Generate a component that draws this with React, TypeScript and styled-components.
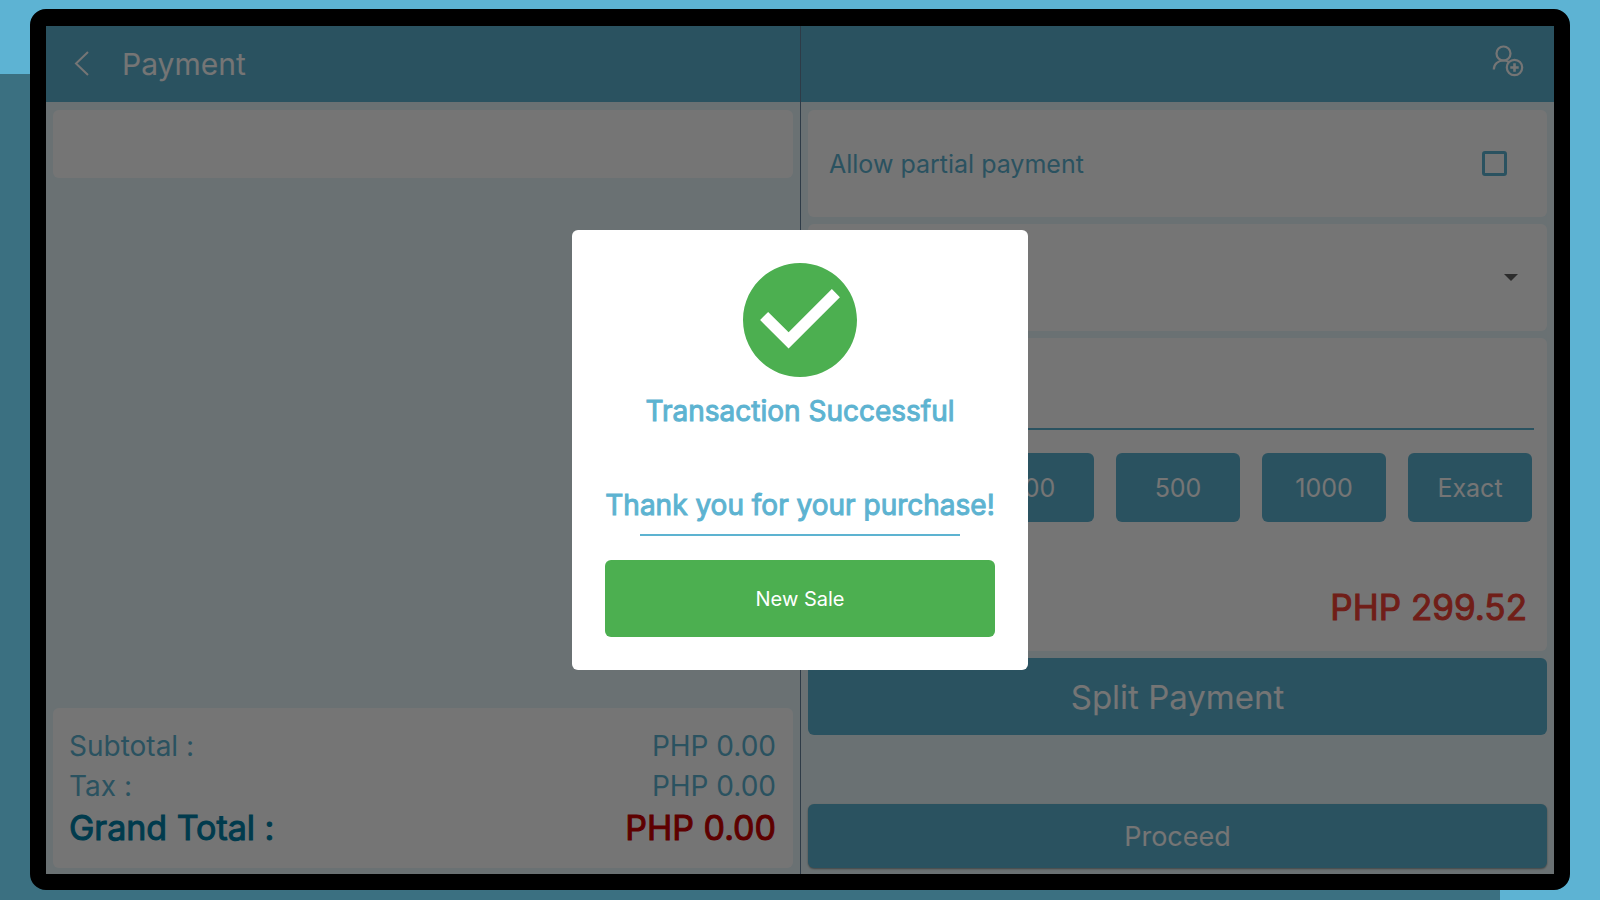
import React, { useState } from "react";
import styled, { createGlobalStyle } from "styled-components";

const color = {
  sky: "#5db3d3",
  slate: "#3b7081",
  brand: "#5db3d1",
  deep: "#0080a8",
  canvas: "#e8f7fa",
  paper: "#ffffff",
  divider: "#64829b",
  green: "#4caf50",
  red: "#f44336",
  crimson: "#cc0000",
};

const GlobalStyle = createGlobalStyle`
  *, *::before, *::after { box-sizing: border-box; }
  button, input, select { font: inherit; color: inherit; }
  body {
    margin: 0;
    font-family: Inter, "Liberation Sans", sans-serif;
    font-optical-sizing: none;
  }
`;

const Page = styled.div`
  min-height: 100vh;
  display: flex;
  padding: 9px 30px 10px;
  background: linear-gradient(${color.slate}, ${color.slate}) left bottom /
    calc(100% - 100px) calc(100% - 74px) no-repeat ${color.sky};
`;

const Tablet = styled.div`
  flex: 1;
  display: flex;
  border: 16px solid #000;
  border-top-width: 17px;
  border-radius: 16px;
  background: #000;
`;

const Screen = styled.div`
  position: relative;
  flex: 1;
  display: grid;
  grid-template-columns: 1fr 1fr;
  background: ${color.canvas};
`;

const Pane = styled.section<{ $divided?: boolean }>`
  display: flex;
  flex-direction: column;
  min-width: 0;
  ${(p) => p.$divided && `border-left: 1px solid ${color.divider};`}
`;

const Header = styled.header<{ $end?: boolean }>`
  height: 76px;
  display: flex;
  align-items: center;
  justify-content: ${(p) => (p.$end ? "flex-end" : "flex-start")};
  gap: 16px;
  padding: ${(p) => (p.$end ? "0 30px 6px" : "0 28px")};
  background: ${color.brand};
  color: ${color.paper};
`;

const Title = styled.h1`
  margin: 0;
  font-size: 30px;
  line-height: 36px;
  font-weight: 400;
`;

const IconButton = styled.button`
  display: flex;
  padding: 0;
  border: 0;
  background: none;
  cursor: pointer;
`;

const Stack = styled.div`
  flex: 1;
  display: flex;
  flex-direction: column;
  gap: 7px;
  padding: 8px 7px 6px;
`;

const Spacer = styled.div`
  flex: 1;
`;

const Card = styled.div`
  border-radius: 6px;
  background: ${color.paper};
`;

const SearchCard = styled(Card)`
  height: 68px;
`;

const Totals = styled(Card)`
  padding: 18px 17px 16px 16px;
`;

const TotalRow = styled.div<{ $grand?: boolean }>`
  display: flex;
  justify-content: space-between;
  color: ${(p) => (p.$grand ? color.deep : color.brand)};
  font-size: ${(p) => (p.$grand ? 34 : 28)}px;
  line-height: ${(p) => (p.$grand ? 44 : 40)}px;
  padding-bottom: ${(p) => (p.$grand ? 2 : 0)}px;
  ${(p) => p.$grand && "-webkit-text-stroke: 1px currentColor;"}
`;

const Amount = styled.span<{ $due?: boolean }>`
  ${(p) => p.$due && `color: ${color.crimson};`}
`;

const PartialCard = styled(Card)`
  height: 107px;
  display: flex;
  align-items: center;
  justify-content: space-between;
  padding: 0 40px 0 21px;
  color: ${color.brand};
  font-size: 25px;
  line-height: 32px;
`;

const Checkbox = styled.input`
  appearance: none;
  width: 25px;
  height: 25px;
  margin: 0;
  border: 3px solid ${color.brand};
  border-radius: 3px;
  &:checked {
    background: ${color.brand};
  }
`;

const MethodCard = styled(Card)`
  height: 107px;
  display: flex;
  align-items: center;
  padding: 0 29px 0 21px;
`;

const MethodSelect = styled.select`
  appearance: none;
  flex: 1;
  height: 48px;
  border: 0;
  background: none;
  color: ${color.brand};
  font-size: 25px;
`;

const PayCard = styled(Card)`
  height: 313px;
  display: flex;
  flex-direction: column;
  padding: 16px 13px 16px 14px;
`;

const TenderInput = styled.input`
  width: 100%;
  height: 76px;
  border: 0;
  border-bottom: 2px solid ${color.brand};
  background: none;
  color: ${color.brand};
  font-size: 34px;
  outline: none;
`;

const QuickRow = styled.div`
  display: grid;
  grid-template-columns: repeat(5, 1fr);
  gap: 22px;
  padding: 23px 2px 0;
`;

const FilledButton = styled.button<{ $height: number; $size: number; $raised?: boolean }>`
  width: 100%;
  height: ${(p) => p.$height}px;
  padding: 0;
  border: 0;
  border-radius: 6px;
  background: ${color.brand};
  color: ${color.paper};
  font-size: ${(p) => p.$size}px;
  cursor: pointer;
  ${(p) => p.$raised && "box-shadow: 0 1px 2px rgba(0, 0, 0, 0.4);"}
`;

const Balance = styled.output`
  display: block;
  padding: 62px 7px 0;
  color: ${color.red};
  font-size: 35px;
  line-height: 46px;
  -webkit-text-stroke: 1px currentColor;
  text-align: right;
`;

const Scrim = styled.div`
  position: absolute;
  inset: 0;
  display: flex;
  align-items: center;
  justify-content: center;
  background: rgba(0, 0, 0, 0.54);
`;

const Dialog = styled.div`
  width: 456px;
  display: flex;
  flex-direction: column;
  align-items: center;
  padding: 33px;
  border-radius: 6px;
  background: ${color.paper};
  color: ${color.brand};
`;

const Message = styled.p`
  margin: 0;
  font-size: 28px;
  line-height: 34px;
  font-weight: 400;
  -webkit-text-stroke: 1px currentColor;
  white-space: nowrap;
`;

const Heading = styled(Message).attrs({ as: "h2" })`
  margin: 17px 0 60px;
`;

const Rule = styled.hr`
  width: 320px;
  margin: 12px 0 24px;
  border: 0;
  border-top: 2px solid ${color.brand};
`;

const NewSaleButton = styled(FilledButton)`
  background: ${color.green};
`;

const BackIcon = () => (
  <svg width="32" height="32" viewBox="0 0 32 32" fill="none" stroke="currentColor" strokeWidth="2" aria-hidden="true">
    <path d="M14 4L2 15.500L14 27" />
  </svg>
);

const AddPersonIcon = () => (
  <svg width="32" height="32" viewBox="0 0 32 32" fill="none" stroke="currentColor" strokeWidth="2.200" aria-hidden="true">
    <circle cx="11.500" cy="8.500" r="7" />
    <path d="M1.800 24.500C1.800 19.200 6 15.500 11.500 15.500C13.500 15.500 15.300 16 16.800 17" />
    <circle cx="22.500" cy="22.500" r="7.700" />
    <path d="M22.500 18.300V26.700M18.300 22.500H26.700" strokeWidth="2.600" />
  </svg>
);

const CaretIcon = () => (
  <svg width="14" height="7" viewBox="0 0 14 7" fill="#616161" aria-hidden="true">
    <path d="M0 0H14L7 7Z" />
  </svg>
);

const SuccessIcon = () => (
  <svg width="114" height="114" viewBox="2 2 20 20" fill={color.green} aria-hidden="true">
    <path d="M12 2C6.480 2 2 6.480 2 12s4.480 10 10 10 10-4.480 10-10S17.520 2 12 2zm-2 15l-5-5 1.410-1.410L10 14.170l7.590-7.590L19 8l-9 9z" />
  </svg>
);

const totals = [
  { label: "Subtotal :", value: "PHP 0.00" },
  { label: "Tax :", value: "PHP 0.00" },
  { label: "Grand Total :", value: "PHP 0.00", grand: true },
];

const quickAmounts = ["", "200", "500", "1000", "Exact"];

export default function App() {
  const [partial, setPartial] = useState(false);
  const [tender, setTender] = useState("");

  return (
    <>
      <GlobalStyle />
      <Page>
        <Tablet>
          <Screen>
            <Pane>
              <Header>
                <IconButton aria-label="Back">
                  <BackIcon />
                </IconButton>
                <Title>Payment</Title>
              </Header>
              <Stack>
                <SearchCard />
                <Spacer />
                <Totals>
                  {totals.map((t) => (
                    <TotalRow key={t.label} $grand={t.grand}>
                      <span>{t.label}</span>
                      <Amount $due={t.grand}>{t.value}</Amount>
                    </TotalRow>
                  ))}
                </Totals>
              </Stack>
            </Pane>
            <Pane $divided>
              <Header $end>
                <IconButton aria-label="Add customer">
                  <AddPersonIcon />
                </IconButton>
              </Header>
              <Stack>
                <PartialCard>
                  <label htmlFor="partial">Allow partial payment</label>
                  <Checkbox
                    id="partial"
                    type="checkbox"
                    checked={partial}
                    onChange={(e) => setPartial(e.target.checked)}
                  />
                </PartialCard>
                <MethodCard>
                  <MethodSelect aria-label="Payment method">
                    <option />
                  </MethodSelect>
                  <CaretIcon />
                </MethodCard>
                <PayCard>
                  <TenderInput aria-label="Amount" value={tender} onChange={(e) => setTender(e.target.value)} />
                  <QuickRow>
                    {quickAmounts.map((q) => (
                      <FilledButton key={q} $height={69} $size={25}>
                        {q}
                      </FilledButton>
                    ))}
                  </QuickRow>
                  <Balance>PHP 299.52</Balance>
                </PayCard>
                <FilledButton $height={77} $size={33}>
                  Split Payment
                </FilledButton>
                <Spacer />
                <FilledButton $height={64} $size={27} $raised>
                  Proceed
                </FilledButton>
              </Stack>
            </Pane>
            <Scrim>
              <Dialog role="dialog" aria-modal="true" aria-labelledby="result">
                <SuccessIcon />
                <Heading id="result">Transaction Successful</Heading>
                <Message>Thank you for your purchase!</Message>
                <Rule />
                <NewSaleButton $height={77} $size={20}>
                  New Sale
                </NewSaleButton>
              </Dialog>
            </Scrim>
          </Screen>
        </Tablet>
      </Page>
    </>
  );
}
